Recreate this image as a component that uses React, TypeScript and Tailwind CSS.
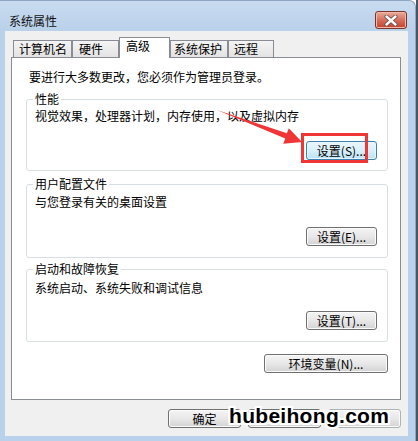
import React from "react";

const font = "font-['Noto_Sans_CJK_SC','Noto_Sans',sans-serif]";

type TabProps = { label: string; w: string; pl: string; active?: boolean };

function Tab({ label, w, pl, active }: TabProps) {
  if (active) {
    return (
      <div className={`${w} ${pl} h-[21px] pt-[1px] border border-b-0 border-[#898c95] bg-white relative z-10 leading-[14px]`}>
        {label}
      </div>
    );
  }
  return (
    <div
      className={`${w} ${pl} h-[17px] mb-[1px] border border-b-0 border-[#898c95] bg-gradient-to-b from-[#f4f4f4] to-[#e3e3e3] leading-[14px] pt-[1px]`}>
      {label}
    </div>
  );
}

function Btn({ label, w, blue, className = "" }: { label?: string; w: string; blue?: boolean; className?: string }) {
  return (
    <div
      className={`${w} h-[19px] rounded-[3px] border flex items-center justify-center leading-[14px] text-[12px] ${
        blue
          ? "border-[#3c7fb1] bg-gradient-to-b from-[#eaf6fd] via-[#d9f0fc] to-[#b9e1f6] shadow-[inset_0_0_0_1px_#e8f6fe]"
          : "border-[#707070] bg-gradient-to-b from-[#f4f4f4] via-[#e8e8e8] to-[#d3d3d3] shadow-[inset_0_0_0_1px_#fbfbfb]"
      } ${className}`}>
      {label}
    </div>
  );
}

type GroupProps = {
  title: string;
  text: string;
  button: string;
  blue?: boolean;
  mt: string;
  h: string;
  pt: string;
  gap: string;
};

function Group({ title, text, button, blue, mt, h, pt, gap }: GroupProps) {
  return (
    <div className={`${mt} ${h} ml-[14px] w-[362px] relative rounded-[3px] border border-[#d5dfe5] flex flex-col ${pt}`}>
      <span className="absolute -top-[8px] left-[6px] bg-white px-[2px] leading-[14px]">{title}</span>
      <div className="pl-[8px] leading-[14px]">{text}</div>
      <Btn label={button} w="w-[71px]" blue={blue} className={`${gap} self-end mr-[10px]`} />
    </div>
  );
}

export default function App() {
  return (
    <div className={`w-[418px] h-[441px] relative overflow-hidden bg-white text-[12px] text-black ${font}`}>
      <div className="flex h-full">
        <div className="w-[416px] h-full flex flex-col bg-[#b9d1ea] border-t border-r border-[#8ea6c0] rounded-tr-[7px]">
          {/* title bar */}
          <div className="h-[30px] flex items-start justify-between bg-gradient-to-b from-[#c8dbf0] to-[#b9d1ea] rounded-tr-[7px]">
            <span className="ml-[9px] mt-[13px] leading-[14px] text-[#111]">系统属性</span>
            <div className="mt-[10px] mr-[8px] w-[32px] h-[18px] rounded-[3px] border border-[#7a3328] bg-gradient-to-b from-[#e9ab9c] via-[#d66e5b] to-[#c2402c] flex items-center justify-center shadow-[inset_0_0_0_1px_#efb9ac]">
              <svg width="14" height="11" viewBox="0 0 14 11">
                <path d="M2.5 1.5 L11.5 9.5 M11.5 1.5 L2.5 9.5" stroke="#5a4a48" strokeWidth="4" strokeLinecap="round" />
                <path d="M2.5 1.5 L11.5 9.5 M11.5 1.5 L2.5 9.5" stroke="#ffffff" strokeWidth="2.4" strokeLinecap="round" />
              </svg>
            </div>
          </div>

          {/* client */}
          <div className="ml-[5px] w-[403px] h-[405px] bg-[#f0f0f0] flex flex-col">
            <div className="ml-[8px] mt-[6px] flex items-end h-[21px] -mb-px relative z-10">
              <Tab label="计算机名" w="w-[59px]" pl="pl-[5px]" />
              <Tab label="硬件" w="w-[47px]" pl="pl-[6px]" />
              <Tab label="高级" w="w-[51px]" pl="pl-[6px]" active />
              <Tab label="系统保护" w="w-[58px]" pl="pl-[3px]" />
              <Tab label="远程" w="w-[46px]" pl="pl-[5px]" />
            </div>

            <div className="ml-[6px] w-[390px] h-[343px] border border-[#898c95] bg-white flex flex-col">
              <div className="mt-[12px] pl-[17px] leading-[14px]">要进行大多数更改，您必须作为管理员登录。</div>

              <Group
                title="性能"
                text="视觉效果，处理器计划，内存使用，以及虚拟内存"
                button="设置(S)..."
                blue
                mt="mt-[15px]"
                h="h-[72px]"
                pt="pt-[9px]"
                gap="mt-[18px]"
              />
              <Group
                title="用户配置文件"
                text="与您登录有关的桌面设置"
                button="设置(E)..."
                mt="mt-[13px]"
                h="h-[74px]"
                pt="pt-[10px]"
                gap="mt-[18px]"
              />
              <Group
                title="启动和故障恢复"
                text="系统启动、系统失败和调试信息"
                button="设置(T)..."
                mt="mt-[11px]"
                h="h-[73px]"
                pt="pt-[11px]"
                gap="mt-[16px]"
              />

              <Btn label="环境变量(N)..." w="w-[124px]" className="mt-[12px] self-end mr-[12px]" />
            </div>

            {/* cancel / apply are hidden under the watermark */}
            <div className="mt-[9px] flex justify-end gap-[7px] pr-[7px]">
              <Btn label="确定" w="w-[73px]" />
              <Btn w="w-[73px]" />
              <Btn w="w-[73px]" className="border-[#adb2b5]" />
            </div>
          </div>
        </div>
        <div className="w-[2px] h-full bg-[#4b5561]" />
      </div>

      {/* annotations */}
      <div className="absolute left-[301px] top-[133px] w-[67px] h-[30px] border-[3px] border-[#ef3535]" />
      <svg className="absolute inset-0 pointer-events-none" width="418" height="441">
        <polygon
          points="217,110 286.9,133.2 288.8,128.3 302,142 283.2,143.7 285.3,138.6"
          fill="#ef3535"
        />
      </svg>
      <div className="absolute left-[229px] top-[405px] font-['Liberation_Sans',sans-serif] font-bold text-[21px] leading-[22px] tracking-[0.3px] text-black [-webkit-text-stroke:2px_#000] [paint-order:stroke_fill] [text-shadow:2px_0_0_#fff,-2px_0_0_#fff,0_2px_0_#fff,0_-2px_0_#fff,2px_2px_0_#fff,-2px_-2px_0_#fff,2px_-2px_0_#fff,-2px_2px_0_#fff]">
        hubeihong.com
      </div>
    </div>
  );
}
